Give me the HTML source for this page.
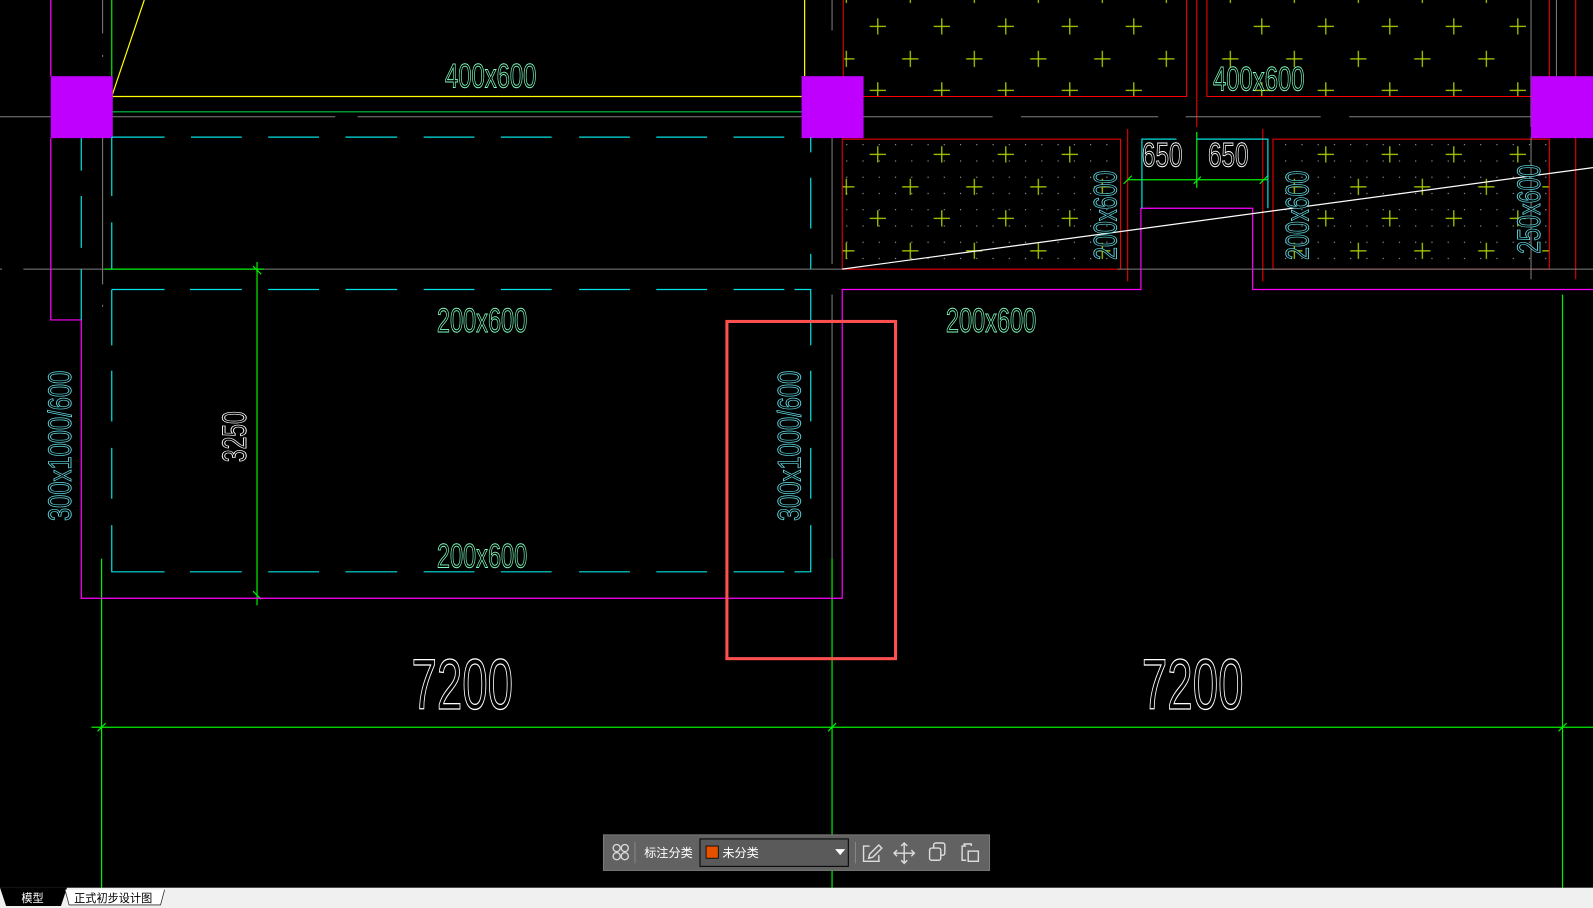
<!DOCTYPE html>
<html><head><meta charset="utf-8"><style>
html,body{margin:0;padding:0;background:#000;width:1593px;height:908px;overflow:hidden}
svg{display:block}
.t{font-family:"Liberation Sans",sans-serif;font-weight:normal}
.c{font-family:"Liberation Sans","Noto Sans CJK SC",sans-serif}
</style></head><body>
<svg width="1593" height="908" viewBox="0 0 1568 894" preserveAspectRatio="none" xmlns="http://www.w3.org/2000/svg">
<defs>
<pattern id="cr" x="831" y="10" width="63" height="63" patternUnits="userSpaceOnUse">
<path d="M33 8v16M25 16h16M2 40v16M-6 48h16M65 40v16M57 48h16" stroke="#b0d000" stroke-width="1.2" fill="none"/>
</pattern>
<pattern id="dt" x="829" y="138" width="16" height="16" patternUnits="userSpaceOnUse">
<rect x="4" y="4" width="1" height="1" fill="#ccc"/>
</pattern>
</defs>
<rect width="1568" height="894" fill="#000"/>
<g>
<rect x="831" y="0" width="337" height="95" fill="url(#cr)"/>
<rect x="1188" y="0" width="319" height="95" fill="url(#cr)"/>
<rect x="829" y="135" width="274" height="130" fill="url(#dt)"/>
<rect x="829" y="135" width="274" height="130" fill="url(#cr)"/>
<rect x="1253" y="135" width="272" height="130" fill="url(#dt)"/>
<rect x="1253" y="135" width="272" height="130" fill="url(#cr)"/>
</g>
<g fill="none" stroke="#ff0000" stroke-width="1">
<path d="M830 0V95H1168V0M1188 0V95H1507M1178 0V125"/>
<rect x="829" y="137" width="274" height="128"/>
<rect x="1253" y="137" width="272" height="128"/>
<path d="M1110 127V277M1243 127V277M1525 0V95M1551 0V275"/>
</g>
<g stroke="#808080" stroke-width="1" fill="none">
<path d="M0 115H87M108 115H330M352 115H789M849 115H977M1005 115H1140M1167 115H1300M1328 115H1507"/>
<path d="M0 265H2M23 265H100M100 265H829M1100 265H1568"/>
<path d="M101 0V33M101 54V56M101 77V280M101 300V302M819 0V30M819 75V260M819 290V550M1507 0V125M1507 135V275M1532 0V75"/>
</g>
<g stroke="#00ee00" stroke-width="1.2" fill="none">
<path d="M100 550V874M819 550V874M1538 290V874M90 716H1568"/>
<path d="M96 720l8-8M815 720l8-8M1534 720l8-8"/>
<path d="M253 258V596M103 265H260M249 262l8 8M249 582l8 8"/>
<path d="M1110 177H1248M1178 130V185M1106 181l8-8M1175 181l7-7M1240 181l8-8"/>
<path d="M110 0V110H789"/>
</g>
<path d="M110 95H789M110 95L142 0M792 0V75" stroke="#ffff00" stroke-width="1.2" fill="none"/>
<path d="M110 110H789" stroke="#008844" stroke-width="1"/>
<g fill="#c000ff">
<rect x="50" y="75" width="61" height="61"/>
<rect x="789" y="75" width="61" height="61"/>
<rect x="1507" y="75" width="61" height="61"/>
</g>
<g stroke="#ff00ff" stroke-width="1.2" fill="none">
<path d="M50 0V75M50 136V315H80V589H829V285H1123V205H1233V285H1568"/>
</g>
<g stroke="#00e0e0" stroke-width="1.2" fill="none">
<path d="M110 135H162M188 135H238M264 135H314M340 135H391M417 135H467M493 135H543M570 135H620M646 135H696M722 135H772M798 135V150M798 175V225M798 250V265"/>
<path d="M110 135V193M110 219V265M80 136V168M80 193V244M80 265V315"/>
<path d="M110 285H162M187 285H238M264 285H314M340 285H391M417 285H467M493 285H543M570 285H620M646 285H696M722 285H772M782 285H798V340M798 365V415M798 441V491M798 517V563H782M772 563H722M696 563H646M620 563H570M543 563H493M467 563H417M391 563H340M314 563H264M238 563H187M162 563H110V517M110 491V441M110 415V365M110 340V285"/>
<path d="M1124 205V137H1158M1178 137H1248V205"/>
</g>
<path d="M829 265L1568 165" stroke="#fff" stroke-width="1.2"/>
<g class="t" fill="#000" stroke="#7fffc0" stroke-width="0.9" font-size="34">
<text x="438" y="86" textLength="90" lengthAdjust="spacingAndGlyphs">400x600</text>
<text x="1194" y="89" textLength="90" lengthAdjust="spacingAndGlyphs">400x600</text>
<text x="430" y="327" textLength="89" lengthAdjust="spacingAndGlyphs">200x600</text>
<text x="430" y="559" textLength="89" lengthAdjust="spacingAndGlyphs">200x600</text>
<text x="931" y="327" textLength="89" lengthAdjust="spacingAndGlyphs">200x600</text>
</g>
<g class="t" fill="#000" stroke="#60d8e0" stroke-width="0.9" font-size="32">
<text transform="translate(70,513) rotate(-90)" textLength="148" lengthAdjust="spacingAndGlyphs">300x1000/600</text>
<text transform="translate(788,513) rotate(-90)" textLength="148" lengthAdjust="spacingAndGlyphs">300x1000/600</text>
<text transform="translate(1099,256) rotate(-90)" textLength="88" lengthAdjust="spacingAndGlyphs">200x600</text>
<text transform="translate(1288,256) rotate(-90)" textLength="88" lengthAdjust="spacingAndGlyphs">200x600</text>
<text transform="translate(1516,250) rotate(-90)" textLength="88" lengthAdjust="spacingAndGlyphs">250x600</text>
</g>
<g class="t" fill="#000" stroke="#fff" stroke-width="0.9">
<text transform="translate(242,455) rotate(-90)" font-size="34" textLength="50" lengthAdjust="spacingAndGlyphs">3250</text>
<text x="1124" y="164" font-size="34" textLength="40" lengthAdjust="spacingAndGlyphs">650</text>
<text x="1189" y="164" font-size="34" textLength="40" lengthAdjust="spacingAndGlyphs">650</text>
<text x="405" y="698" font-size="70" stroke-width="1.2" textLength="100" lengthAdjust="spacingAndGlyphs">7200</text>
<text x="1124" y="698" font-size="70" stroke-width="1.2" textLength="100" lengthAdjust="spacingAndGlyphs">7200</text>
</g>
<rect x="715.5" y="316.5" width="166" height="332" fill="none" stroke="#ff5050" stroke-width="3"/>
<g>
<rect x="594" y="822" width="380" height="35" fill="#626262" stroke="#7a7a7a"/>
<g fill="none" stroke="#ddd" stroke-width="1.3">
<circle cx="607" cy="835" r="3.5"/><circle cx="615" cy="835" r="3.5"/><circle cx="607" cy="843" r="3.5"/><circle cx="615" cy="843" r="3.5"/>
</g>
<path d="M625 829V850" stroke="#888"/>
<text class="c" x="634" y="844" font-size="12" fill="#fff">标注分类</text>
<rect x="689" y="826" width="146" height="27" fill="#5a5a5a" stroke="#000"/>
<rect x="695" y="833" width="12" height="12" fill="#e65100" stroke="#000" stroke-width="0.8"/>
<text class="c" x="711" y="844" font-size="12" fill="#fff">未分类</text>
<path d="M822 836h10l-5 6z" fill="#fff"/>
<path d="M842 829V850" stroke="#888"/>
<g fill="none" stroke="#ddd" stroke-width="1.4">
<path d="M856 833h-6v15h15v-6M855 845l1-4 9-9 3 3-9 9zM852 848h14"/>
<path d="M890 830v20M880 840h20M887 833l3-3 3 3M887 847l3 3 3-3M883 837l-3 3 3 3M897 837l3 3-3 3"/>
<rect x="915" y="835" width="11" height="12" rx="2"/><path d="M919 835v-3a2 2 0 0 1 2-2h7a2 2 0 0 1 2 2v8a2 2 0 0 1-2 2h-2"/>
<path d="M951 847h-4v-14h4M949 833v-2h7v2"/><rect x="953" y="838" width="10" height="10"/>
</g>
</g>
<rect x="0" y="874" width="1568" height="20" fill="#f0f0f0"/>
<path d="M0 874 H66 L60 892 H6 L2 880Z" fill="#000"/>
<text class="c" x="21" y="888" font-size="11" fill="#fff">模型</text>
<path d="M64 876 L68 891 H158 L162 876" fill="#fff" stroke="#333" stroke-width="0.8"/>
<text class="c" x="73" y="888" font-size="11" fill="#000">正式初步设计图</text>
</svg>
</body></html>
